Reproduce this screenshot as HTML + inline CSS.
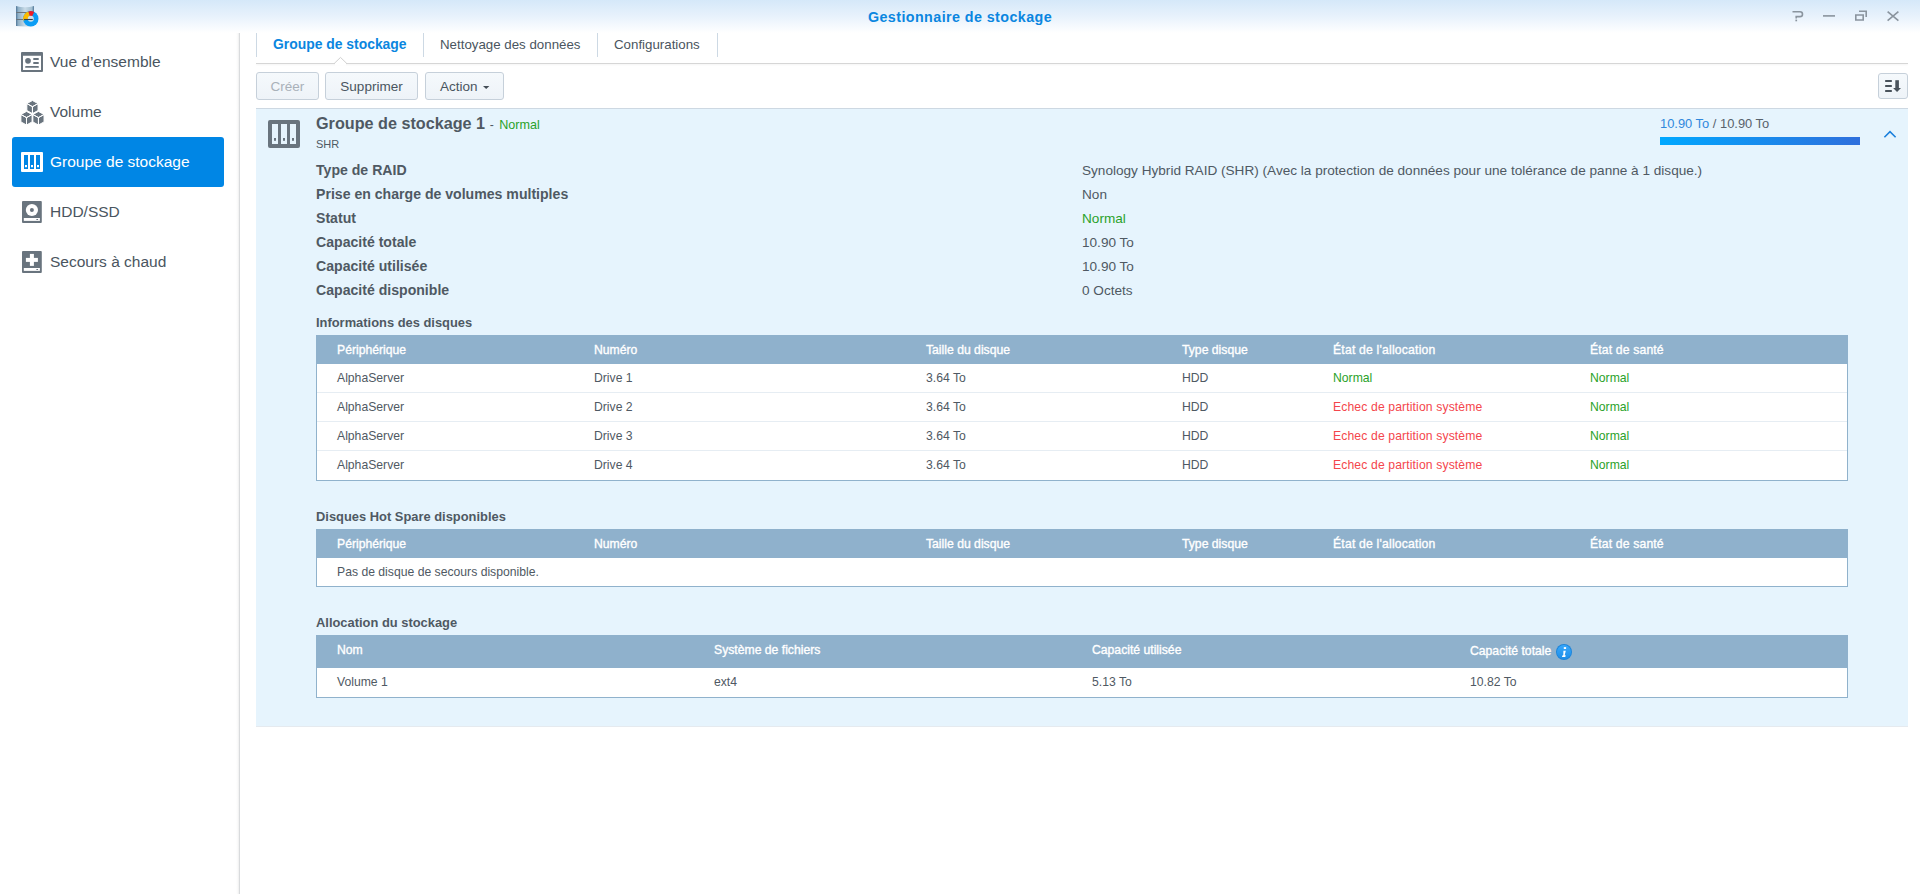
<!DOCTYPE html>
<html><head><meta charset="utf-8">
<style>
*{box-sizing:border-box;margin:0;padding:0}
html,body{width:1920px;height:894px;overflow:hidden;background:#fff;font-family:"Liberation Sans",sans-serif;color:#4a5560}
.a{position:absolute;white-space:nowrap}
#hdr{position:absolute;left:0;top:0;width:1920px;height:33px;background:linear-gradient(#d5e8f9 0%,#e8f2fc 50%,#ffffff 100%)}
#title{left:0;width:1920px;text-align:center;top:7.5px;font-size:14.3px;letter-spacing:.42px;font-weight:bold;color:#0a86e0;line-height:18px}
#sidebar-b{position:absolute;left:236px;top:33px;width:4px;height:861px;background:linear-gradient(90deg,rgba(0,0,0,0) 0%,rgba(0,0,0,.03) 60%,#d9dbdd 75%,#d9dbdd 100%)}
.nav{position:absolute;left:12px;width:212px;height:50px;border-radius:3px}
.nav.sel{background:#0086e5}
.nav .t{position:absolute;left:38px;top:16px;font-size:15.5px;line-height:18px;color:#4a5560;white-space:nowrap}
.nav.sel .t{color:#fff}
.nav svg{position:absolute;left:9px}
.tab{font-size:13.3px;line-height:16px;top:36.6px;color:#4a5560}
.tsep{position:absolute;top:33px;width:1px;height:24px;background:#cdd9e4}
#tabline{position:absolute;left:256px;top:63px;width:1652px;height:1px;background:#d6d6d6;box-shadow:0 1px 2px rgba(0,0,0,.06)}
.btn{position:absolute;top:72px;height:28px;border:1px solid #c6d0da;border-radius:3px;background:linear-gradient(#f5f9fc,#eef3f8);font-size:13.5px;line-height:28px;text-align:center;color:#4a5560}
#panel{position:absolute;left:256px;top:108px;width:1652px;height:619px;background:#e6f4fd;border-top:1px solid #cdd8e2;border-bottom:1px solid #e5eaef}
.lbl{font-size:14.1px;font-weight:bold;line-height:16px;color:#4f5963}
.val{font-size:13.6px;line-height:16px;color:#4f5963}
.green,.td.green,.val.green{color:#2aa22a}
.red,.td.red{color:#f4464c}
.sec{font-size:12.9px;font-weight:bold;line-height:14px;color:#4f5963}
.tbl{position:absolute;left:316px;width:1532px;background:#fff;border:1px solid #90b2cc;border-top:none}
.th{position:absolute;left:-1px;right:-1px;top:0;background:#8fb1cc}
.thc{position:absolute;font-size:12.2px;font-weight:normal;-webkit-text-stroke:.35px #fff;color:#fff;line-height:14px;white-space:nowrap}
.td{position:absolute;font-size:12.2px;color:#4f5963;line-height:14px;white-space:nowrap}
.rsep{position:absolute;left:0;right:0;height:1px;background:#e6edf3}
</style></head><body>
<div id="hdr"></div>
<!-- app icon -->
<svg class="a" style="left:15px;top:5px" width="26" height="24" viewBox="0 0 26 24">
  <defs><linearGradient id="cyl" x1="0" x2="1"><stop offset="0" stop-color="#4f7597"/><stop offset=".12" stop-color="#8eafc6"/><stop offset=".5" stop-color="#c9dbe7"/><stop offset=".88" stop-color="#a3bfd1"/><stop offset="1" stop-color="#4f7597"/></linearGradient></defs>
  <path d="M1 1 Q10 3.4 19 1 V21 Q10 21.8 1 21 Z" fill="url(#cyl)"/>
  <path d="M1 7.5H19M1 14.5H19" stroke="#6a747c" stroke-width="1"/>
  <circle cx="15.8" cy="13.8" r="7.7" fill="#0a9df5"/>
  <path d="M15.8 13.8 L8.3 15.6 A7.7 7.7 0 0 1 13.4 6.5 Z" fill="#fbbb00"/>
  <path d="M15.8 13.8 L13.4 6.5 A7.7 7.7 0 0 1 19.2 6.9 Z" fill="#ee1c24"/>
  <circle cx="15.8" cy="13.8" r="3" fill="#cfe0ea"/>
  <path d="M9 14.5H17.8" stroke="#353f48" stroke-width="1.1"/>
</svg>
<div id="title" class="a">Gestionnaire de stockage</div>
<!-- window buttons -->
<svg class="a" style="left:1790px;top:9px" width="120" height="16" viewBox="0 0 120 16">
  <g fill="none" stroke="#8a949e" stroke-width="1.6">
    <path d="M2.5 2.8 H10 Q12.5 2.8 12.5 5.2 Q12.5 7.6 10 7.6 H6.2 V9.6"/>
    <path d="M33 6.9 H45"/>
    <path d="M65.8 6 H73.2 V11 H65.8 Z"/>
    <path d="M69 2.2 H76.2 V8"/>
    <path d="M97.6 2.6 L108.4 11.6 M108.4 2.6 L97.6 11.6"/>
  </g>
  <rect x="5.4" y="10.6" width="1.7" height="1.7" fill="#8a949e"/>
</svg>

<div id="sidebar-b"></div>

<!-- nav -->
<div class="nav" style="top:37px">
  <svg style="left:9px;top:15px" width="22" height="20" viewBox="0 0 22 20"><path d="M1 0H21Q22 0 22 1V19Q22 20 21 20H1Q0 20 0 19V1Q0 0 1 0Z M2 3.8V18H20V3.8Z" fill="#69747e" fill-rule="evenodd"/><circle cx="7" cy="8.8" r="2.85" fill="#69747e"/><rect x="12.2" y="6" width="5.6" height="1.9" rx=".4" fill="#69747e"/><rect x="12.2" y="10.1" width="5.6" height="1.9" rx=".4" fill="#69747e"/><rect x="4.2" y="14" width="13.6" height="1.8" rx=".4" fill="#69747e"/></svg>
  <div class="t">Vue d’ensemble</div>
</div>
<div class="nav" style="top:87px">
  <svg style="left:6px;top:11px" width="30" height="28" viewBox="0 0 30 28"><path d="M14.45 2.5L20.05 5.6L14.45 8.7L8.85 5.6ZM8.85 5.6L14.45 8.7L14.45 15.6L8.85 12.5ZM14.45 8.7L20.05 5.6L20.05 12.5L14.45 15.6ZM8.5 13.4L14.1 16.5L8.5 19.6L2.9 16.5ZM2.9 16.5L8.5 19.6L8.5 27.0L2.9 23.9ZM8.5 19.6L14.1 16.5L14.1 23.9L8.5 27.0ZM20.45 13.4L26.05 16.5L20.45 19.6L14.85 16.5ZM14.85 16.5L20.45 19.6L20.45 27.0L14.85 23.9ZM20.45 19.6L26.05 16.5L26.05 23.9L20.45 27.0Z" fill="#69747e" stroke="#fff" stroke-width="1" stroke-linejoin="miter"/></svg>
  <div class="t">Volume</div>
</div>
<div class="nav sel" style="top:137px">
  <svg style="left:9px;top:15px" width="22" height="20" viewBox="0 0 22 20"><rect x="0" y="0" width="22" height="20" rx="1" fill="#fff"/><rect x="3" y="3" width="4" height="14" fill="#0086e5"/><rect x="9" y="3" width="4" height="14" fill="#0086e5"/><rect x="15" y="3" width="4" height="14" fill="#0086e5"/><rect x="4" y="13" width="2" height="2.2" fill="#fff"/><rect x="10" y="13" width="2" height="2.2" fill="#fff"/><rect x="16" y="13" width="2" height="2.2" fill="#fff"/></svg>
  <div class="t">Groupe de stockage</div>
</div>
<div class="nav" style="top:187px">
  <svg style="left:10px;top:14px" width="20" height="22" viewBox="0 0 20 22"><rect x="0" y="0" width="19.8" height="22" rx="1" fill="#69747e"/><circle cx="9.9" cy="9" r="6.1" fill="#fff"/><circle cx="9.9" cy="9" r="2" fill="#69747e"/><rect x="1.8" y="17" width="16.1" height="2.9" fill="#fff"/><rect x="14.2" y="18" width="2" height=".9" rx=".4" fill="#69747e"/></svg>
  <div class="t">HDD/SSD</div>
</div>
<div class="nav" style="top:237px">
  <svg style="left:10px;top:14px" width="20" height="22" viewBox="0 0 20 22"><rect x="0" y="0" width="19.8" height="22" rx="1" fill="#69747e"/><rect x="7.9" y="2.9" width="4" height="12" fill="#fff"/><rect x="3.9" y="6.9" width="12" height="4" fill="#fff"/><rect x="1.8" y="17" width="16.1" height="2.9" fill="#fff"/><rect x="14.2" y="18" width="2" height=".9" rx=".4" fill="#69747e"/></svg>
  <div class="t">Secours à chaud</div>
</div>

<!-- tabs -->
<div class="tsep" style="left:256px"></div>
<div class="a tab" style="left:273px;top:35.6px;font-weight:bold;color:#0a86e0;font-size:13.9px">Groupe de stockage</div>
<div class="tsep" style="left:423px"></div>
<div class="a tab" style="left:440px">Nettoyage des données</div>
<div class="tsep" style="left:597px"></div>
<div class="a tab" style="left:614px">Configurations</div>
<div class="tsep" style="left:717px"></div>
<div id="tabline"></div>
<svg class="a" style="left:333.5px;top:56px" width="13" height="10" viewBox="0 0 13 10"><rect x="0.9" y="6.5" width="11.2" height="3" fill="#fff"/><path d="M0.2 7.5 L6.5 1.4 L12.8 7.5" fill="none" stroke="#cfcfcf" stroke-width="1"/></svg>

<!-- toolbar -->
<div class="btn" style="left:256px;width:63px;color:#a9b1b9">Créer</div>
<div class="btn" style="left:325px;width:93px">Supprimer</div>
<div class="btn" style="left:425px;width:79px;text-align:left;padding-left:14px">Action<svg style="position:absolute;left:57px;top:12.8px" width="7" height="4" viewBox="0 0 7 4"><path d="M0 0H6.4L3.2 3.1Z" fill="#444d56"/></svg></div>
<div class="btn" style="left:1878px;width:30px;top:73px;height:26px">
  <svg style="position:absolute;left:5px;top:5px" width="18" height="15" viewBox="0 0 18 15"><g fill="#49525b"><rect x="1.1" y="1.1" width="6.8" height="1.8" rx=".3"/><rect x="1.1" y="6.1" width="6.8" height="1.8" rx=".3"/><rect x="1.1" y="11.1" width="6.8" height="1.8" rx=".3"/><rect x="11.3" y="1.2" width="3.6" height="9"/><path d="M9.1 9H17L13.05 12.9Z"/></g></svg>
</div>

<!-- panel -->
<div id="panel"></div>
<svg class="a" style="left:268px;top:120px" width="32" height="28" viewBox="0 0 32 28"><path d="M2 0H30Q32 0 32 2V26Q32 28 30 28H2Q0 28 0 26V2Q0 0 2 0Z M4 4V24H10V4Z M13 4V24H19V4Z M22 4V24H28V4Z" fill="#69747e" fill-rule="evenodd"/><rect x="6" y="18" width="2" height="2.8" fill="#69747e"/><rect x="15" y="18" width="2" height="2.8" fill="#69747e"/><rect x="24" y="18" width="2" height="2.8" fill="#69747e"/></svg>
<div class="a" style="left:316px;top:114px;font-size:16.2px;font-weight:bold;line-height:18px;color:#4f5963">Groupe de stockage 1 <span style="font-weight:normal;font-size:12.2px;color:#4f5963">-</span> <span class="green" style="font-weight:normal;font-size:12.6px;margin-left:1px">Normal</span></div>
<div class="a" style="left:316px;top:137px;font-size:11px;line-height:14px;color:#4f5963">SHR</div>

<div class="a" style="left:1660px;top:116.5px;font-size:12.9px;line-height:14px;color:#58626c"><span style="color:#3088dc">10.90 To</span> / 10.90 To</div>
<div class="a" style="left:1660px;top:137px;width:200px;height:8px;background:linear-gradient(90deg,#00a8ff,#2f6fdc)"></div>
<svg class="a" style="left:1883px;top:129px" width="14" height="9" viewBox="0 0 14 9"><path d="M1.4 8.2 L7 2.7 L12.6 8.2" fill="none" stroke="#1a7fdc" stroke-width="1.6"/></svg>

<div class="a lbl" style="left:316px;top:162px">Type de RAID</div>
<div class="a lbl" style="left:316px;top:186px">Prise en charge de volumes multiples</div>
<div class="a lbl" style="left:316px;top:210px">Statut</div>
<div class="a lbl" style="left:316px;top:234px">Capacité totale</div>
<div class="a lbl" style="left:316px;top:258px">Capacité utilisée</div>
<div class="a lbl" style="left:316px;top:282px">Capacité disponible</div>

<div class="a val" style="left:1082px;top:162.7px">Synology Hybrid RAID (SHR) (Avec la protection de données pour une tolérance de panne à 1 disque.)</div>
<div class="a val" style="left:1082px;top:186.7px">Non</div>
<div class="a val green" style="left:1082px;top:210.7px">Normal</div>
<div class="a val" style="left:1082px;top:234.7px">10.90 To</div>
<div class="a val" style="left:1082px;top:258.7px">10.90 To</div>
<div class="a val" style="left:1082px;top:282.7px">0 Octets</div>

<!-- disks info -->
<div class="a sec" style="left:316px;top:315.5px">Informations des disques</div>
<div class="tbl" style="top:335px;height:146px">
  <div class="th" style="height:29px">
    <div class="thc" style="left:21px;top:8px">Périphérique</div>
    <div class="thc" style="left:278px;top:8px">Numéro</div>
    <div class="thc" style="left:610px;top:8px">Taille du disque</div>
    <div class="thc" style="left:866px;top:8px">Type disque</div>
    <div class="thc" style="left:1017px;top:8px;letter-spacing:.2px">État de l'allocation</div>
    <div class="thc" style="left:1274px;top:8px;letter-spacing:.15px">État de santé</div>
  </div>
  <div class="td" style="left:20px;top:36px">AlphaServer</div><div class="td" style="left:277px;top:36px">Drive 1</div><div class="td" style="left:609px;top:36px">3.64 To</div><div class="td" style="left:865px;top:36px">HDD</div><div class="td green" style="left:1016px;top:36px">Normal</div><div class="td green" style="left:1273px;top:36px">Normal</div>
  <div class="rsep" style="top:57px"></div>
  <div class="td" style="left:20px;top:65px">AlphaServer</div><div class="td" style="left:277px;top:65px">Drive 2</div><div class="td" style="left:609px;top:65px">3.64 To</div><div class="td" style="left:865px;top:65px">HDD</div><div class="td red" style="letter-spacing:.12px;left:1016px;top:65px">Echec de partition système</div><div class="td green" style="left:1273px;top:65px">Normal</div>
  <div class="rsep" style="top:86px"></div>
  <div class="td" style="left:20px;top:94px">AlphaServer</div><div class="td" style="left:277px;top:94px">Drive 3</div><div class="td" style="left:609px;top:94px">3.64 To</div><div class="td" style="left:865px;top:94px">HDD</div><div class="td red" style="letter-spacing:.12px;left:1016px;top:94px">Echec de partition système</div><div class="td green" style="left:1273px;top:94px">Normal</div>
  <div class="rsep" style="top:115px"></div>
  <div class="td" style="left:20px;top:123px">AlphaServer</div><div class="td" style="left:277px;top:123px">Drive 4</div><div class="td" style="left:609px;top:123px">3.64 To</div><div class="td" style="left:865px;top:123px">HDD</div><div class="td red" style="letter-spacing:.12px;left:1016px;top:123px">Echec de partition système</div><div class="td green" style="left:1273px;top:123px">Normal</div>
</div>

<div class="a sec" style="left:316px;top:510px">Disques Hot Spare disponibles</div>
<div class="tbl" style="top:529px;height:58px">
  <div class="th" style="height:29px">
    <div class="thc" style="left:21px;top:8px">Périphérique</div>
    <div class="thc" style="left:278px;top:8px">Numéro</div>
    <div class="thc" style="left:610px;top:8px">Taille du disque</div>
    <div class="thc" style="left:866px;top:8px">Type disque</div>
    <div class="thc" style="left:1017px;top:8px;letter-spacing:.2px">État de l'allocation</div>
    <div class="thc" style="left:1274px;top:8px;letter-spacing:.15px">État de santé</div>
  </div>
  <div class="td" style="left:20px;top:36px">Pas de disque de secours disponible.</div>
</div>

<div class="a sec" style="left:316px;top:616px">Allocation du stockage</div>
<div class="tbl" style="top:635px;height:63px">
  <div class="th" style="height:33px">
    <div class="thc" style="left:21px;top:8px">Nom</div>
    <div class="thc" style="left:398px;top:8px">Système de fichiers</div>
    <div class="thc" style="left:776px;top:8px">Capacité utilisée</div>
    <div class="thc" style="left:1154px;top:9px">Capacité totale</div>
    <svg style="position:absolute;left:1240px;top:9px" width="16" height="16" viewBox="0 0 16 16"><defs><linearGradient id="ig" x1="0" y1="0" x2="0" y2="1"><stop offset="0" stop-color="#39a8fb"/><stop offset="1" stop-color="#1e8ee8"/></linearGradient></defs><circle cx="8" cy="8" r="8" fill="#1b84da"/><circle cx="8" cy="8" r="7.1" fill="url(#ig)"/><rect x="7.8" y="3.1" width="2.3" height="1.9" fill="#fff"/><path d="M7.4 6.7H9.8L8.7 11.3L9.7 11.2L9.3 13H5.9L6.6 11.3H7.3Z" fill="#fff"/></svg>
  </div>
  <div class="td" style="left:20px;top:40px">Volume 1</div>
  <div class="td" style="left:397px;top:40px">ext4</div>
  <div class="td" style="left:775px;top:40px">5.13 To</div>
  <div class="td" style="left:1153px;top:40px">10.82 To</div>
</div>

</body></html>
